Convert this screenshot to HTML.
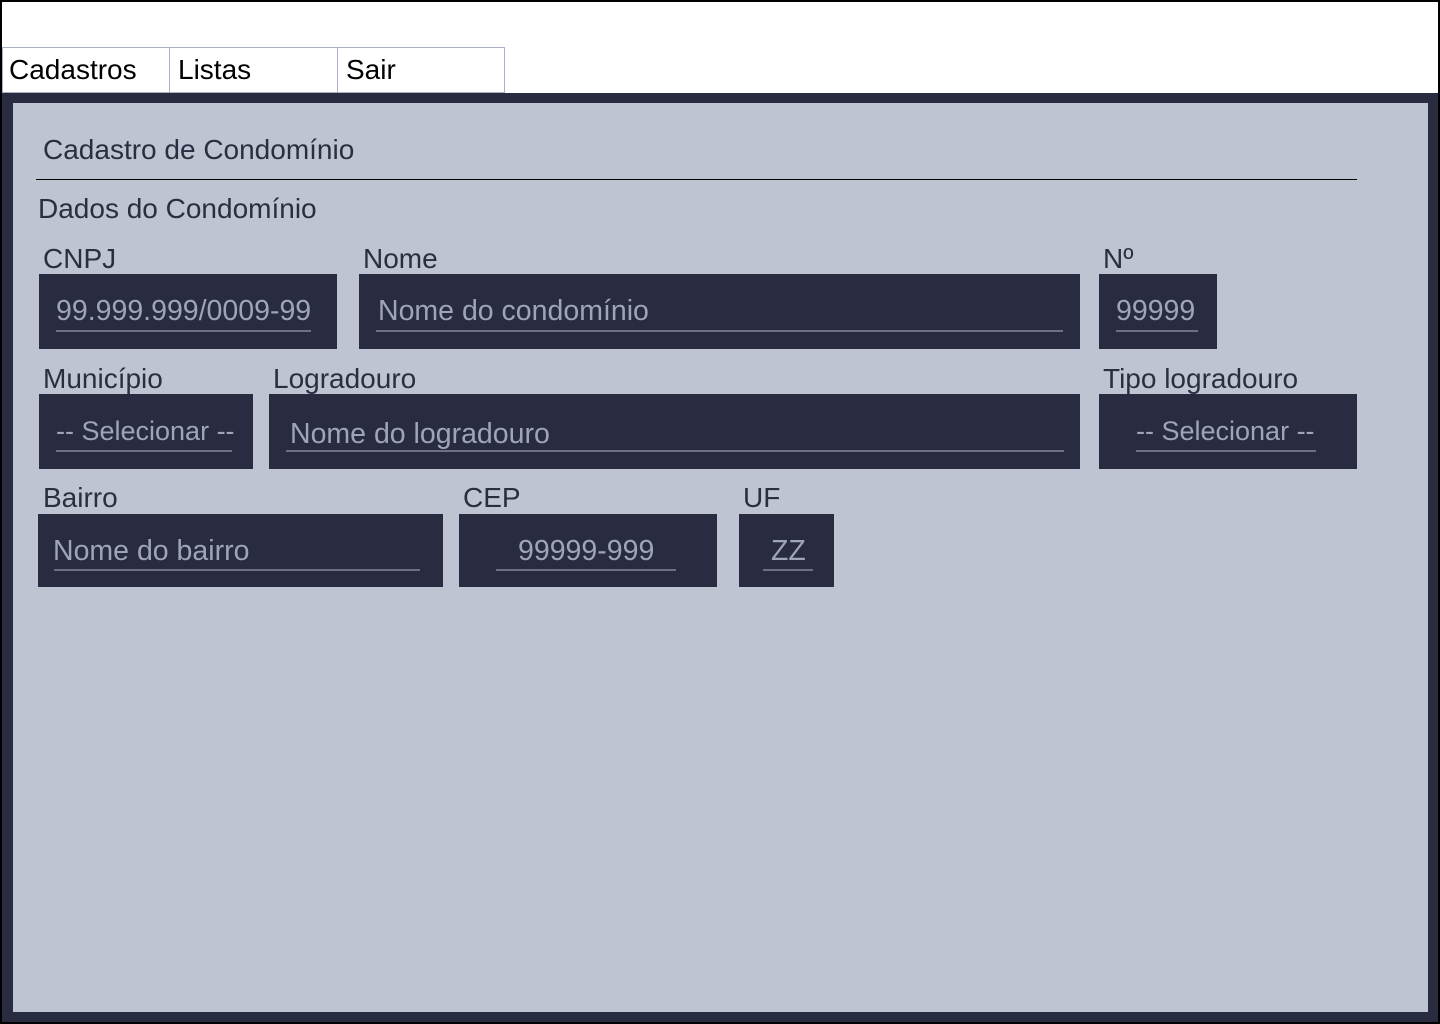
<!DOCTYPE html>
<html><head><meta charset="utf-8"><style>
*{margin:0;padding:0;box-sizing:border-box}
body{width:1440px;height:1024px;background:#000;position:relative;overflow:hidden;font-family:"Liberation Sans",Roboto,sans-serif}
.a{position:absolute}
#white{left:2px;top:2px;width:1436px;height:91px;background:#fff}
.tab{position:absolute;top:47px;height:46px;border:1px solid #a9b0c6;background:#fff;font-size:28px;color:#000;padding:5px 0 0 6px;line-height:34px}
#frame{left:2px;top:93px;width:1436px;height:929px;background:#292c40}
#panel{left:13px;top:103px;width:1415px;height:909px;background:#bec4d2}
.t{position:absolute;font-size:28px;color:#2b2e40;line-height:30px;white-space:nowrap}
.box{position:absolute;background:#292c40}
.ph{position:absolute;font-size:28.5px;color:#9ea5b9;line-height:30px;white-space:nowrap}
.ul{position:absolute;height:2px;background:#6c7189}
</style></head><body>
<div class="a" id="white"></div>
<div class="tab" style="left:2px;width:168px">Cadastros</div>
<div class="tab" style="left:169px;width:169px;padding-left:8px">Listas</div>
<div class="tab" style="left:337px;width:168px;padding-left:8px">Sair</div>
<div class="a" id="frame"></div>
<div class="a" id="panel"></div>

<div class="t" style="left:43px;top:135px">Cadastro de Condomínio</div>
<div class="a" style="left:36px;top:179px;width:1321px;height:1px;background:#000"></div>
<div class="t" style="left:38px;top:194px">Dados do Condomínio</div>

<div class="t" style="left:43px;top:244px">CNPJ</div>
<div class="box" style="left:39px;top:274px;width:298px;height:75px"></div>
<div class="ph" style="left:56px;top:296px">99.999.999/0009-99</div>
<div class="ul" style="left:56px;top:330px;width:255px"></div>

<div class="t" style="left:363px;top:244px">Nome</div>
<div class="box" style="left:359px;top:274px;width:721px;height:75px"></div>
<div class="ph" style="left:378px;top:296px">Nome do condomínio</div>
<div class="ul" style="left:376px;top:330px;width:687px"></div>

<div class="t" style="left:1103px;top:244px">Nº</div>
<div class="box" style="left:1099px;top:274px;width:118px;height:75px"></div>
<div class="ph" style="left:1116px;top:296px">99999</div>
<div class="ul" style="left:1116px;top:330px;width:82px"></div>

<div class="t" style="left:43px;top:364px">Município</div>
<div class="box" style="left:39px;top:394px;width:214px;height:75px"></div>
<div class="ph" style="left:56px;top:416px;font-size:27px">-- Selecionar --</div>
<div class="ul" style="left:56px;top:450px;width:176px"></div>

<div class="t" style="left:273px;top:364px">Logradouro</div>
<div class="box" style="left:269px;top:394px;width:811px;height:75px"></div>
<div class="ph" style="left:290px;top:419px">Nome do logradouro</div>
<div class="ul" style="left:286px;top:450px;width:778px"></div>

<div class="t" style="left:1103px;top:364px">Tipo logradouro</div>
<div class="box" style="left:1099px;top:394px;width:258px;height:75px"></div>
<div class="ph" style="left:1136px;top:416px;font-size:27px">-- Selecionar --</div>
<div class="ul" style="left:1136px;top:450px;width:180px"></div>

<div class="t" style="left:43px;top:483px">Bairro</div>
<div class="box" style="left:38px;top:514px;width:405px;height:73px"></div>
<div class="ph" style="left:53px;top:536px">Nome do bairro</div>
<div class="ul" style="left:54px;top:569px;width:366px"></div>

<div class="t" style="left:463px;top:483px">CEP</div>
<div class="box" style="left:459px;top:514px;width:258px;height:73px"></div>
<div class="ph" style="left:518px;top:536px">99999-999</div>
<div class="ul" style="left:496px;top:569px;width:180px"></div>

<div class="t" style="left:743px;top:483px">UF</div>
<div class="box" style="left:739px;top:514px;width:95px;height:73px"></div>
<div class="ph" style="left:771px;top:536px">ZZ</div>
<div class="ul" style="left:763px;top:569px;width:50px"></div>
</body></html>
